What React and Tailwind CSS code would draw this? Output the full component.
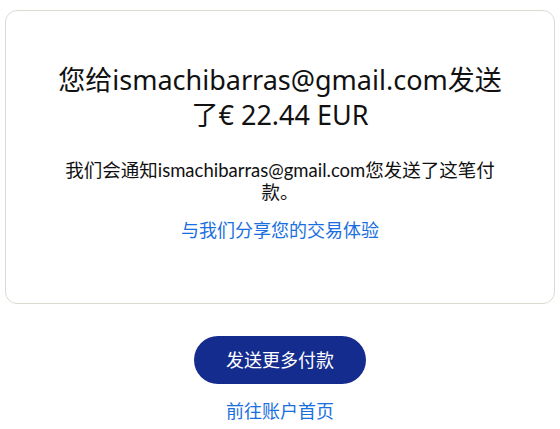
import React from 'react';

function App() {
    return (
        <div className="min-h-screen bg-white pt-[10px] font-['Lato','Noto_Sans_CJK_SC',sans-serif]">
            <div className="ml-[5px] w-[550px] h-[294px] rounded-xl border border-[#dcdad0] pt-[51px] flex flex-col items-center">
                <h1 className="w-[460px] text-center text-[27px] leading-[35px] text-[#111111] font-normal font-['Noto_Sans','Noto_Sans_CJK_SC',sans-serif]">
                    您给ismachibarras@gmail.com发送了€ 22.44 EUR
                </h1>
                <p className="mt-[27px] w-[446px] text-center text-[18.5px] leading-[22px] text-[#111111]">
                    我们会通知ismachibarras@gmail.com您发送了这笔付款。
                </p>
                <a href="#" className="mt-[16px] text-[18px] leading-[22px] text-[#1a6fe0]">
                    与我们分享您的交易体验
                </a>
            </div>
            <div className="flex flex-col items-center">
                <button className="mt-[32px] w-[172px] h-[48px] rounded-full bg-[#142c8e] text-white text-[18px]">
                    发送更多付款
                </button>
                <a href="#" className="mt-[16px] text-[18px] leading-[22px] text-[#1a6fe0]">
                    前往账户首页
                </a>
            </div>
        </div>
    );
}

export default App;
